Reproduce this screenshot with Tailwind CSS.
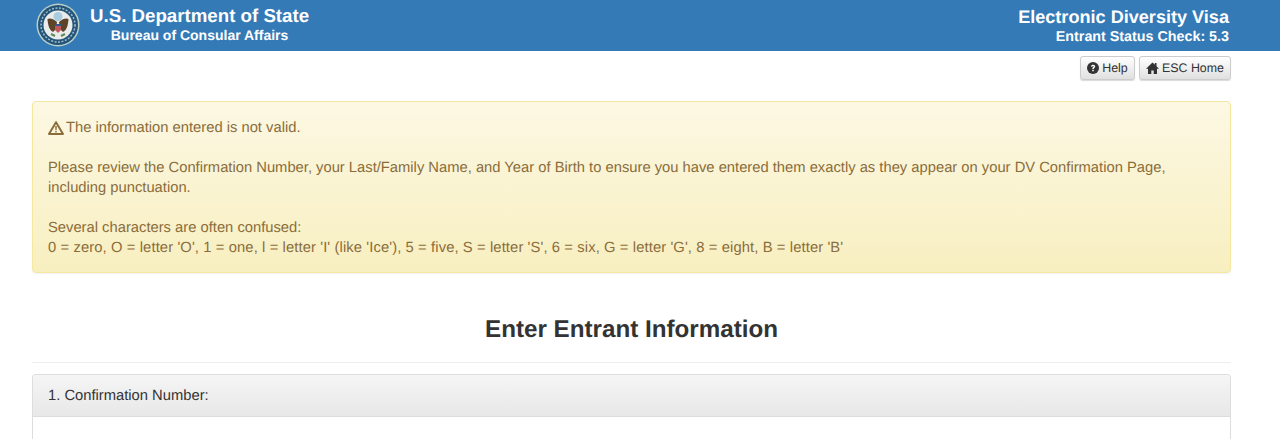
<!DOCTYPE html>
<html lang="en">
<head>
    <meta charset="UTF-8">
    <title>Electronic Diversity Visa - Entrant Status Check</title>
    <script src="https://cdn.jsdelivr.net/npm/@tailwindcss/browser@4"></script>
</head>
<body class="bg-white font-['Liberation_Sans',Arial,sans-serif] [text-rendering:geometricPrecision] text-[14.760px] leading-[20px] text-[#333] overflow-hidden h-[439px]">

    <!-- Header -->
    <header class="h-[51px] bg-[#337ab7] text-white flex justify-between font-bold">
        <div class="flex pl-[36px] pt-[3px]">
            <svg class="w-[44px] h-[44px] shrink-0" viewBox="0 0 44 44">
                <circle cx="22" cy="22" r="21.5" fill="#b9cfc9"/>
                <circle cx="22" cy="22" r="20" fill="#245578"/>
                <circle cx="22" cy="22" r="17" fill="none" stroke="#9fbccb" stroke-width="1.500" stroke-dasharray="2 1.500"/>
                <circle cx="22" cy="22" r="14.500" fill="#e9ecea"/>
                <circle cx="22" cy="13.500" r="4.500" fill="#a9cde0"/>
                <path d="M21 19 C17 15 13 15 11.500 16 C12 22 13 27 17 29 L20 26 Z" fill="#5c4428"/>
                <path d="M23 19 C27 15 31 15 32.500 16 C32 22 31 27 27 29 L24 26 Z" fill="#5c4428"/>
                <path d="M19 21 H25 V27 L22 30 L19 27 Z" fill="#c2565a"/>
                <path d="M19 21 H25 V23 H19 Z" fill="#34568a"/>
                <path d="M15 31 L19 33 M29 31 L25 33" stroke="#5e8a58" stroke-width="2"/>
            </svg>
            <div class="ml-[10px] text-center whitespace-nowrap">
                <div class="text-[18.700px] leading-[24px] mt-[1px]">U.S. Department of State</div>
                <div class="text-[14px] leading-[18px] -mt-[2px]">Bureau of Consular Affairs</div>
            </div>
        </div>
        <div class="pr-[51px] pt-[5px] text-right">
            <div class="text-[18.100px] leading-[24px]">Electronic Diversity Visa</div>
            <div class="text-[14.300px] leading-[16px]">Entrant Status Check: 5.3</div>
        </div>
    </header>

    <main class="w-[1199px] ml-[32px]">
        <!-- Top buttons -->
        <div class="flex justify-end gap-[4px] pt-[5px] h-[50px] text-[12.400px]">
            <a class="w-[55px] h-[24px] flex items-center justify-center gap-[3px] leading-[18px] rounded-[3px] border border-[#ccc] bg-linear-to-b from-white to-[#e0e0e0] shadow-[0_1px_1px_rgba(0,0,0,0.15)]">
                <svg class="w-[12px] h-[12px]" viewBox="0 0 12 12">
                    <circle cx="6" cy="6" r="6" fill="#333"/>
                    <path d="M3.900 4.600 C4 3.300 5 2.700 6.100 2.700 C7.300 2.700 8.200 3.500 8.200 4.500 C8.200 5.800 6.800 5.800 6.800 7 H5.300 C5.300 5.400 6.600 5.300 6.600 4.600 C6.600 4.200 6.400 4 6 4 C5.600 4 5.400 4.300 5.300 4.800 Z M5.300 7.700 H6.800 V9.200 H5.300 Z" fill="#fff"/>
                </svg>
                Help
            </a>
            <a class="w-[92px] h-[24px] flex items-center justify-center gap-[3px] leading-[18px] rounded-[3px] border border-[#ccc] bg-linear-to-b from-white to-[#e0e0e0] shadow-[0_1px_1px_rgba(0,0,0,0.15)]">
                <svg class="w-[13px] h-[12px]" viewBox="0 0 13 12">
                    <path d="M6.500 0.500 L8.800 2.700 V1 H10.500 V4.300 L13 6.800 H11 V12 H7.700 V8.500 H5.300 V12 H2 V6.800 H0 Z" fill="#333"/>
                </svg>
                ESC Home
            </a>
        </div>

        <!-- Warning -->
        <div class="h-[172px] px-[15px] pt-[16px] rounded-[4px] border border-[#f5e79e] bg-linear-to-b from-[#fcf8e3] to-[#f8efc0] text-[#8a6d3b] shadow-[0_1px_2px_rgba(0,0,0,0.06)]">
            <div class="flex items-center gap-[2px]">
                <svg class="w-[16px] h-[14px]" viewBox="0 0 16 14">
                    <path d="M8 1.200 L15 13 H1 Z" fill="none" stroke="#8a6d3b" stroke-width="2" stroke-linejoin="round"/>
                    <path d="M7.200 5 H8.800 L8.600 9.300 H7.400 Z M7.300 10 H8.700 V11.400 H7.300 Z" fill="#8a6d3b"/>
                </svg>
                <span>The information entered is not valid.</span>
            </div>
            <p class="mt-[20px]">Please review the Confirmation Number, your Last/Family Name, and Year of Birth to ensure you have entered them exactly as they appear on your DV Confirmation Page, including punctuation.</p>
            <p class="mt-[20px]">Several characters are often confused:<br><span class="tracking-[0.11px]">0 = zero, O = letter 'O', 1 = one, l = letter 'I' (like 'Ice'), 5 = five, S = letter 'S', 6 = six, G = letter 'G', 8 = eight, B = letter 'B'</span></p>
        </div>

        <!-- Heading -->
        <div class="mt-[40px] pb-[16px] border-b border-[#eee]">
            <h1 class="text-center text-[24.200px] leading-[33px] font-bold">Enter Entrant Information</h1>
        </div>

        <!-- Panel -->
        <div class="mt-[11px] h-[65px] rounded-t-[4px] border border-b-0 border-[#ddd]">
            <div class="h-[42px] px-[15px] pt-[1px] flex items-center border-b border-[#ddd] rounded-t-[3px] bg-linear-to-b from-[#f5f5f5] to-[#e8e8e8]">
                1. Confirmation Number:
            </div>
        </div>
    </main>

</body>
</html>
